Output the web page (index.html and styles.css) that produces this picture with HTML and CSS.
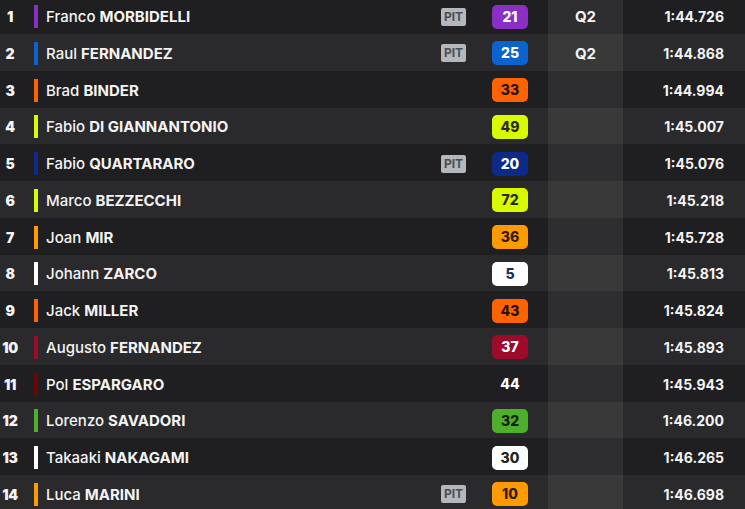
FILE: index.html
```html
<!DOCTYPE html>
<html>
<head>
<meta charset="utf-8">
<link rel="stylesheet" href="styles.css">
</head>
<body>
<div class="table">
  <div class="row"><span class="pos">1</span><span class="bar c-purple"></span><span class="name">Franco <b>MORBIDELLI</b></span><span class="pit">PIT</span><span class="num b-purple">21</span><span class="q">Q2</span><span class="time">1:44.726</span></div>
  <div class="row"><span class="pos">2</span><span class="bar c-blue"></span><span class="name">Raul <b>FERNANDEZ</b></span><span class="pit">PIT</span><span class="num b-blue">25</span><span class="q">Q2</span><span class="time">1:44.868</span></div>
  <div class="row"><span class="pos">3</span><span class="bar c-orange"></span><span class="name">Brad <b>BINDER</b></span><span class="nopit"></span><span class="num b-orange">33</span><span class="q"></span><span class="time">1:44.994</span></div>
  <div class="row"><span class="pos">4</span><span class="bar c-lime"></span><span class="name">Fabio <b>DI GIANNANTONIO</b></span><span class="nopit"></span><span class="num b-lime">49</span><span class="q"></span><span class="time">1:45.007</span></div>
  <div class="row"><span class="pos">5</span><span class="bar c-navy"></span><span class="name">Fabio <b>QUARTARARO</b></span><span class="pit">PIT</span><span class="num b-navy">20</span><span class="q"></span><span class="time">1:45.076</span></div>
  <div class="row"><span class="pos">6</span><span class="bar c-lime"></span><span class="name">Marco <b>BEZZECCHI</b></span><span class="nopit"></span><span class="num b-lime">72</span><span class="q"></span><span class="time">1:45.218</span></div>
  <div class="row"><span class="pos">7</span><span class="bar c-amber"></span><span class="name">Joan <b>MIR</b></span><span class="nopit"></span><span class="num b-amber">36</span><span class="q"></span><span class="time">1:45.728</span></div>
  <div class="row"><span class="pos">8</span><span class="bar c-white"></span><span class="name">Johann <b>ZARCO</b></span><span class="nopit"></span><span class="num b-white b-navytext">5</span><span class="q"></span><span class="time">1:45.813</span></div>
  <div class="row"><span class="pos">9</span><span class="bar c-orange"></span><span class="name">Jack <b>MILLER</b></span><span class="nopit"></span><span class="num b-orange">43</span><span class="q"></span><span class="time">1:45.824</span></div>
  <div class="row"><span class="pos">10</span><span class="bar c-crimson"></span><span class="name">Augusto <b>FERNANDEZ</b></span><span class="nopit"></span><span class="num b-crimson">37</span><span class="q"></span><span class="time">1:45.893</span></div>
  <div class="row"><span class="pos">11</span><span class="bar c-maroon"></span><span class="name">Pol <b>ESPARGARO</b></span><span class="nopit"></span><span class="num b-none">44</span><span class="q"></span><span class="time">1:45.943</span></div>
  <div class="row"><span class="pos">12</span><span class="bar c-green"></span><span class="name">Lorenzo <b>SAVADORI</b></span><span class="nopit"></span><span class="num b-green">32</span><span class="q"></span><span class="time">1:46.200</span></div>
  <div class="row"><span class="pos">13</span><span class="bar c-white"></span><span class="name">Takaaki <b>NAKAGAMI</b></span><span class="nopit"></span><span class="num b-white">30</span><span class="q"></span><span class="time">1:46.265</span></div>
  <div class="row"><span class="pos">14</span><span class="bar c-amber"></span><span class="name">Luca <b>MARINI</b></span><span class="pit">PIT</span><span class="num b-amber">10</span><span class="q"></span><span class="time">1:46.698</span></div>
</div>
</body>
</html>
```

FILE: styles.css
```css
html, body {
  margin: 0;
  padding: 0;
  background: #202022;
  overflow: hidden;
}
body {
  font-family: Inter, "Noto Sans", sans-serif;
  color: #f4f4f4;
}
.table {
  margin-top: -2.75px;
}
.row {
  display: grid;
  grid-template-columns: 20px 18px 403px 25px 62px 95px 1fr;
  height: 36.75px;
  align-items: center;
  background: #1f1f21;
}
.row:nth-child(even) {
  background: #2a2a2c;
}
.row > * {
  margin-top: 2px;
}
.pos {
  text-align: center;
  font-weight: 900;
  font-size: 14px;
  letter-spacing: -0.3px;
}
.bar {
  margin-left: 14px;
  width: 4px;
  height: 23px;
}
.name {
  padding-left: 8px;
  font-size: 15px;
  font-weight: 500;
  white-space: nowrap;
}
.name b {
  font-weight: 700;
}
.pit {
  height: 18px;
  background: #b4b8bd;
  color: #4a4e54;
  border-radius: 2px;
  font-size: 12px;
  font-weight: 700;
  line-height: 18px;
  text-align: center;
}
.nopit {
  height: 18px;
}
.num {
  margin-left: 26px;
  width: 36px;
  height: 24px;
  border-radius: 5px;
  line-height: 24px;
  text-align: center;
  font-size: 14px;
  font-weight: 800;
  color: #2a1c10;
}
.q {
  align-self: stretch;
  margin-top: 0;
  margin-left: 20px;
  padding-top: 2px;
  background: rgba(255, 255, 255, 0.07);
  display: flex;
  align-items: center;
  justify-content: center;
  font-size: 15px;
  font-weight: 700;
}
.time {
  text-align: right;
  padding-right: 21px;
  font-size: 14px;
  font-weight: 700;
}

.c-purple { background: #8a2fc6; }
.c-blue { background: #0b63d0; }
.c-orange { background: #ff6200; }
.c-lime { background: #d8fb00; }
.c-navy { background: #0c2a86; }
.c-amber { background: #ff9a00; }
.c-white { background: #ffffff; }
.c-crimson { background: #9e0a2a; }
.c-maroon { background: #6a0606; }
.c-green { background: #4daf2c; }

.b-purple { background: #8a2fc6; color: #fff; }
.b-blue { background: #0b63d0; color: #fff; }
.b-orange { background: #ff6200; color: #2b1406; }
.b-lime { background: #d8fb00; color: #2a2a10; }
.b-navy { background: #0c2a86; color: #fff; }
.b-amber { background: #ff9a00; color: #2e1d08; }
.b-white { background: #ffffff; color: #222; }
.b-navytext { color: #1b2d55; }
.b-crimson { background: #9e0a2a; color: #fff; }
.b-none { background: transparent; color: #fff; }
.b-green { background: #4daf2c; color: #10240a; }
```
